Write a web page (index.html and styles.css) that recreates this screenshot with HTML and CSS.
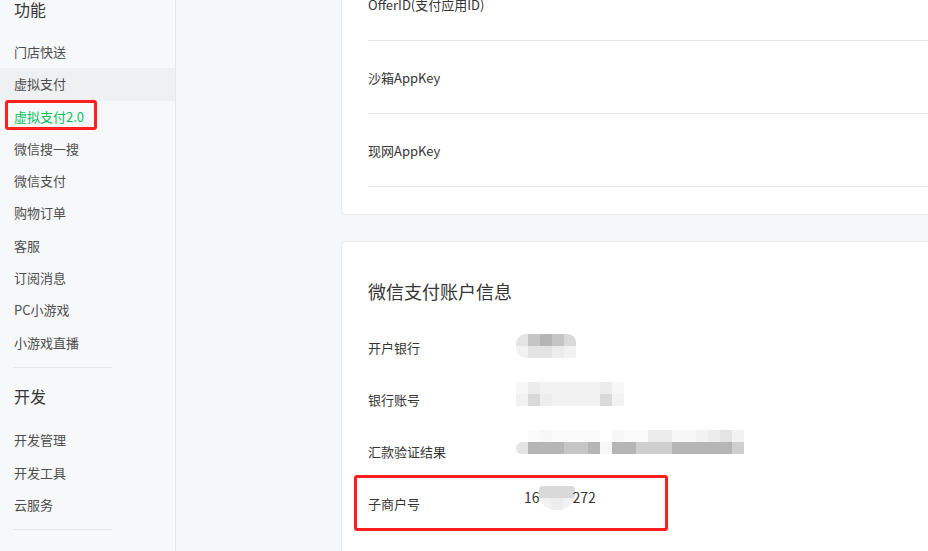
FILE: index.html
```html
<!DOCTYPE html>
<html lang="zh-CN">
<head>
    <meta charset="UTF-8">
    <meta name="viewport" content="width=device-width, initial-scale=1.0">
    <title>虚拟支付2.0</title>
    <link rel="stylesheet" href="styles.css">
</head>
<body>
<div class="layout">
    <div class="sidebar">
        <div class="nav-title first">功能</div>
        <ul class="nav">
            <li>门店快送</li>
            <li class="hover">虚拟支付</li>
            <li class="active marked">虚拟支付2.0</li>
            <li>微信搜一搜</li>
            <li>微信支付</li>
            <li>购物订单</li>
            <li>客服</li>
            <li>订阅消息</li>
            <li>PC小游戏</li>
            <li>小游戏直播</li>
        </ul>
        <div class="nav-line"></div>
        <div class="nav-title">开发</div>
        <ul class="nav">
            <li>开发管理</li>
            <li>开发工具</li>
            <li>云服务</li>
        </ul>
        <div class="nav-line"></div>
    </div>

    <div class="main">
        <div class="card card-top">
            <div class="row">OfferID(支付应用ID)</div>
            <div class="row">沙箱AppKey</div>
            <div class="row">现网AppKey</div>
        </div>

        <div class="card card-bank">
            <h3 class="card-title">微信支付账户信息</h3>
            <div class="info">
                <div class="info-label">开户银行</div>
                <div class="info-value v1">
                    <div class="mosaic cols5 round-l">
                        <span class="g5"></span><span class="g2"></span><span class="g1"></span><span class="g2"></span><span class="g4 tr"></span>
                        <span class="g7"></span><span class="g5"></span><span class="g5"></span><span class="g6"></span><span class="g7"></span>
                    </div>
                </div>
            </div>
            <div class="info">
                <div class="info-label">银行账号</div>
                <div class="info-value v2">
                    <div class="mosaic cols9">
                        <span class="g8"></span><span class="g6"></span><span class="g7"></span><span class="g7"></span><span class="g7"></span><span class="g7"></span><span class="g7"></span><span class="g6"></span><span class="g8"></span>
                        <span class="g7"></span><span class="g4"></span><span class="g6"></span><span class="g7"></span><span class="g7"></span><span class="g7"></span><span class="g7"></span><span class="g4"></span><span class="g7"></span>
                    </div>
                </div>
            </div>
            <div class="info">
                <div class="info-label">汇款验证结果</div>
                <div class="info-value v3">
                    <div class="mosaic cols19">
                        <span class="g0"></span><span class="g9"></span><span class="g8"></span><span class="g9"></span><span class="g9"></span><span class="g9"></span><span class="g9"></span><span class="g0"></span><span class="g8"></span><span class="g9"></span><span class="g9"></span><span class="g6"></span><span class="g6"></span><span class="g8"></span><span class="g8"></span><span class="g7"></span><span class="g6"></span><span class="g5"></span><span class="g7"></span>
                        <span class="g5 bl"></span><span class="g1"></span><span class="g1"></span><span class="g1"></span><span class="g2"></span><span class="g2"></span><span class="g1"></span><span class="g8"></span><span class="g1"></span><span class="g1"></span><span class="g3"></span><span class="g3"></span><span class="g3"></span><span class="g1"></span><span class="g1"></span><span class="g1"></span><span class="g1"></span><span class="g1"></span><span class="g3"></span>
                    </div>
                </div>
            </div>
            <div class="info marked-row">
                <div class="info-label">子商户号</div>
                <div class="info-value v4">
                    <span class="num">16</span>
                    <div class="mosaic cols3 blob">
                        <span class="g4"></span><span class="g4"></span><span class="g4"></span>
                        <span class="g7"></span><span class="g6"></span><span class="g7"></span>
                    </div>
                    <span class="num">272</span>
                </div>
            </div>
        </div>
    </div>
</div>
</body>
</html>
```

FILE: styles.css
```css
body { margin: 0; height: 551px; overflow: hidden; background: #f6f7f9; font-family: "Noto Sans CJK SC", "Noto Sans", sans-serif; color: #353535; }
.layout { display: flex; height: 551px; }

/* 左侧菜单 */
.sidebar { width: 175px; flex: none; background: #f7f8fa; border-right: 1px solid #e4e6e9; }
.nav-title { font-size: 16px; line-height: 20px; padding-left: 14px; margin: 18px 0 18.5px; color: #353535; }
.nav-title.first { margin-top: -1px; margin-bottom: 17px; }
.nav { list-style: none; margin: 0; padding: 0; }
.nav li { position: relative; height: 32.3px; line-height: 32.3px; padding-left: 14px; font-size: 13px; color: #4d4d4d; }
.nav li.hover { background: #eff0f2; }
.nav li.active { color: #07c160; }
.nav li.marked::after {
    content: "";
    position: absolute;
    left: 5px;
    top: -1px;
    width: 92px;
    height: 30px;
    box-sizing: border-box;
    border: 3px solid #ff1f1f;
    border-radius: 3px;
}
.nav-line { height: 1px; background: #e5e6e8; margin: 8px 0 0 13px; width: 99px; }

/* 右侧内容 */
.main { flex: 1; padding-left: 165px; }
.card { width: 800px; background: #fff; border: 1px solid #e7e8eb; border-radius: 4px; padding-left: 26px; }
.card-top { margin-top: -33px; padding-bottom: 27px; }
.row { height: 72px; display: flex; align-items: center; border-bottom: 1px solid #e5e5e5; font-size: 13px; }

.card-bank { margin-top: 26px; padding-top: 37px; height: 400px; }
.card-title { margin: 0 0 19px; font-size: 18px; line-height: 24px; font-weight: normal; color: #353535; }
.info { position: relative; display: flex; height: 52px; font-size: 13px; }
.info-label { width: 148px; line-height: 52px; }
.info-value { display: flex; align-items: flex-start; }
.v1 { padding-top: 12px; }
.v2 { padding-top: 8px; }
.v3 { padding-top: 4px; }
.v4 { padding-top: 8px; padding-left: 8px; }
.num { font-size: 14px; line-height: 22px; color: #353535; }
.marked-row::after {
    content: "";
    position: absolute;
    left: -14px;
    top: -3px;
    width: 314px;
    height: 56px;
    box-sizing: border-box;
    border: 3px solid #ff1f1f;
    border-radius: 3px;
}

/* 打码块 */
.mosaic { display: grid; grid-auto-rows: 12px; overflow: hidden; }
.mosaic span { display: block; }
.cols3 { grid-template-columns: repeat(3, 12px); }
.cols5 { grid-template-columns: repeat(5, 12px); }
.cols9 { grid-template-columns: repeat(9, 12px); }
.cols19 { grid-template-columns: repeat(19, 12px); }
.round-l { border-radius: 10px 8px 0 10px; }
.blob { border-radius: 4px 4px 16px 16px; margin-left: -1px; margin-right: -2px; }
.tr { border-top-right-radius: 8px; }
.bl { border-radius: 10px 0 0 10px; }
.g0 { background: #fff; }
.g1 { background: #b5b5b5; }
.g2 { background: #c5c5c5; }
.g3 { background: #cfcfcf; }
.g4 { background: #d9d9d9; }
.g5 { background: #e4e4e4; }
.g6 { background: #ececec; }
.g7 { background: #f2f2f2; }
.g8 { background: #f7f7f7; }
.g9 { background: #fbfbfb; }
```
